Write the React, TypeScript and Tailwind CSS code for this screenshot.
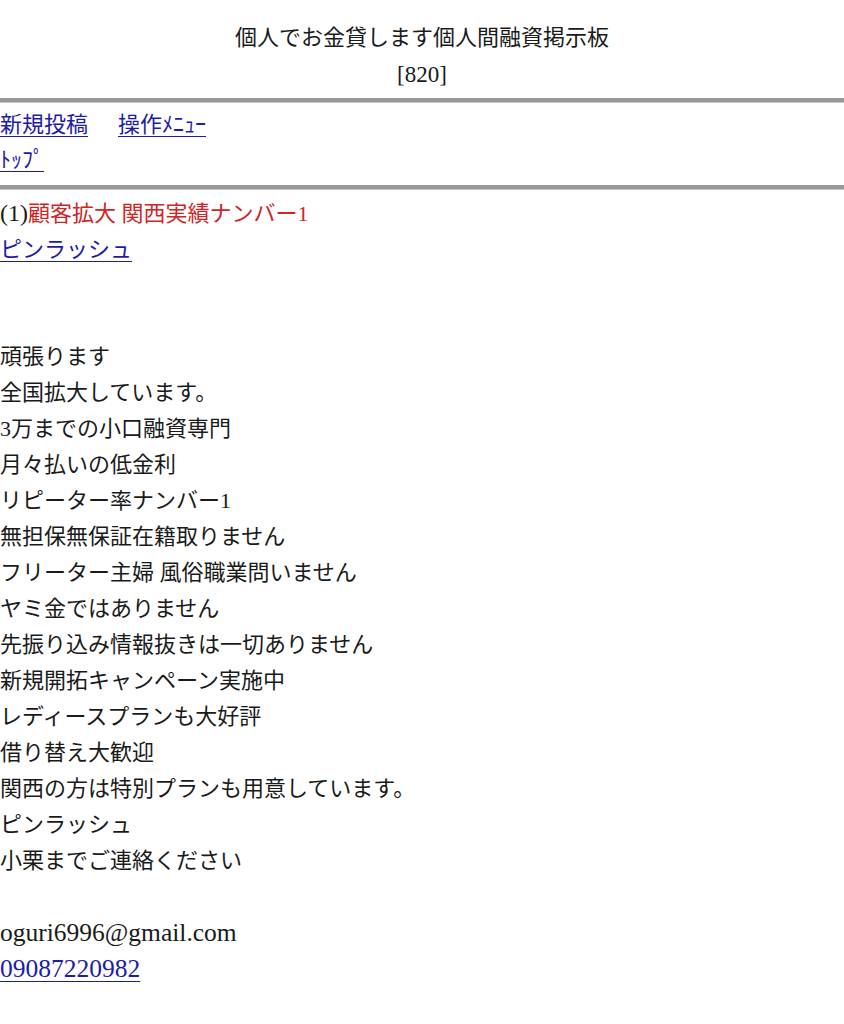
/*
  BBS POST PAGE -- mobile style bulletin board thread view
    header title + counter, menu links between two gray rules, then one post body
*/

const bodyLines = [
  "頑張ります",
  "全国拡大しています。",
  "3万までの小口融資専門",
  "月々払いの低金利",
  "リピーター率ナンバー1",
  "無担保無保証在籍取りません",
  "フリーター主婦 風俗職業問いません",
  "ヤミ金ではありません",
  "先振り込み情報抜きは一切ありません",
  "新規開拓キャンペーン実施中",
  "レディースプランも大好評",
  "借り替え大歓迎",
  "関西の方は特別プランも用意しています。",
  "ピンラッシュ",
  "小栗までご連絡ください",
]

const linkCls = "text-[#1c1ca8] underline underline-offset-[4px] decoration-1"

function Rule() {
  return <div className="h-[5px] w-full bg-[#999999] border-b border-[#c8c8c8]" />
}

export default function App() {
  return (
    <div
      className="min-h-[1024px] w-full bg-white text-[22px] text-[#1a1a1a]"
      style={{ fontFamily: '"Liberation Serif", "Noto Sans CJK JP", serif' }}
    >
      {/* header */}
      <div className="pt-[19px] text-center">
        <div className="leading-[37px]">個人でお金貸します個人間融資掲示板</div>
        <div className="leading-[37px] text-[23px]">[820]</div>
      </div>

      <div className="mt-[5px]">
        <Rule />
      </div>

      {/* menu */}
      <div className="pt-[5px]">
        <div className="flex gap-[30px] leading-[34px]">
          <a href="#" className={linkCls}>新規投稿</a>
          <a href="#" className={linkCls}>操作ﾒﾆｭｰ</a>
        </div>
        <div className="leading-[36px]">
          <a href="#" className={linkCls}>ﾄｯﾌﾟ</a>
        </div>
      </div>

      <div className="mt-[7px]">
        <Rule />
      </div>

      {/* post */}
      <div className="pt-[5px] leading-[36px]">
        <div>
          <span className="text-[24px]">(1)</span>
          <span className="text-[#cf2525]">顧客拡大 関西実績ナンバー1</span>
        </div>
        <div>
          <a href="#" className={linkCls}>ピンラッシュ</a>
        </div>
        <div className="h-[36px]" />
        <div className="h-[35px]" />
        {bodyLines.map((line, i) => (
          <div key={i}>{line}</div>
        ))}
        <div className="h-[36px]" />
        <div className="text-[25.5px]">oguri6996@gmail.com</div>
        <div className="text-[25.5px]">
          <a href="#" className={linkCls}>09087220982</a>
        </div>
      </div>
    </div>
  )
}
